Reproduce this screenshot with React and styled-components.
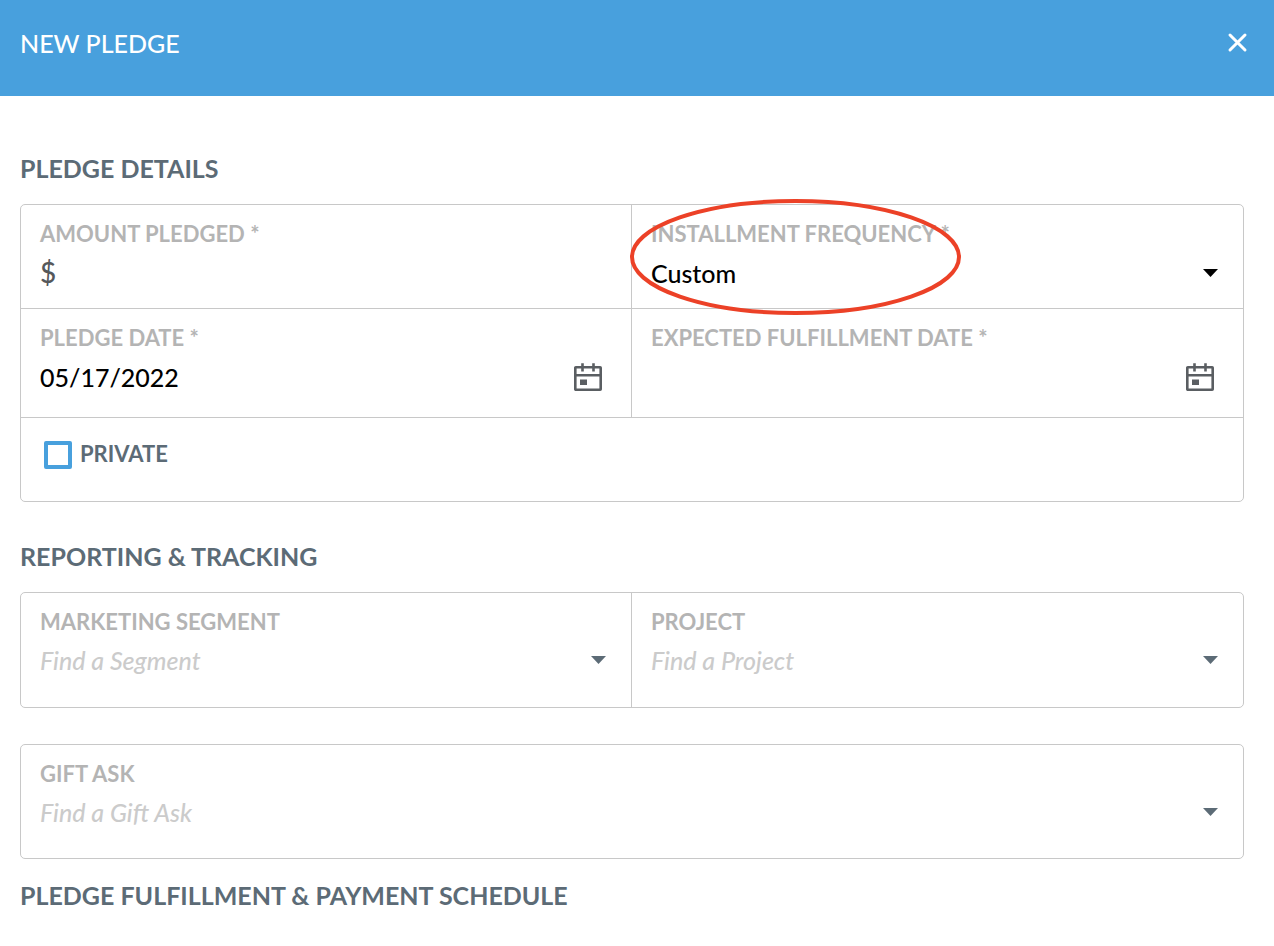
import React, { useState } from "react";
import styled, { createGlobalStyle } from "styled-components";

const GlobalStyle = createGlobalStyle`
*{
box-sizing:border-box;
}
body{
margin:0;
background-color:white;
font-family:Lato, "Open Sans", sans-serif;
}
`;

const Header = styled.header`
display:flex;
align-items:flex-start;
justify-content:space-between;
height:96px;
padding:27px 26px 0 20px;
background-color:#48a0dd;
color:white;
`;

const Title = styled.h1`
margin:0;
font-size:25px;
line-height:32px;
font-weight:500;
`;

const CloseButton = styled.button`
display:flex;
margin-top:5px;
padding:0;
border:none;
background:none;
color:inherit;
cursor:pointer;
`;

const Form = styled.form`
padding:56px 30px 32px 20px;
`;

const SectionTitle = styled.h2`
margin:0;
font-size:25px;
line-height:32px;
font-weight:700;
color:#5c6b76;
`;

const Card = styled.div`
margin-top:${(props) => (props.$spaced ? "36px" : "20px")};
margin-bottom:${(props) => props.$bottom || "0"};
border:1px solid #c8c8c8;
border-radius:5px;
`;

const Row = styled.div`
display:grid;
grid-template-columns:${(props) => (props.$single ? "1fr" : "1fr 1fr")};
height:${(props) => props.$height};
& + &{
border-top:1px solid #c8c8c8;
}
`;

const Cell = styled.div`
position:relative;
display:flex;
flex-direction:column;
min-width:0;
padding:15px 19px 0;
&:not(:last-child){
border-right:1px solid #c8c8c8;
}
`;

const Label = styled.label`
font-size:22px;
line-height:28px;
font-weight:700;
color:#b4b4b4;
`;

const Control = styled.div`
display:flex;
align-items:center;
height:40px;
margin-top:${(props) => (props.$tight ? "4px" : "5px")};
color:${(props) => props.$color || "#5c6b76"};
`;

const Prefix = styled.span`
font-size:28px;
line-height:32px;
font-weight:500;
color:#55585b;
`;

const Input = styled.input`
flex:1;
min-width:0;
height:32px;
padding:0;
border:none;
outline:none;
background:none;
font-family:inherit;
font-size:25px;
font-weight:500;
color:black;
`;

const Select = styled.select`
flex:1;
min-width:0;
height:36px;
padding:0;
border:none;
outline:none;
appearance:none;
background:none;
font-family:inherit;
font-size:25px;
font-weight:500;
font-style:${(props) => (props.$empty ? "italic" : "normal")};
color:${(props) => (props.$empty ? "#cbcbcb" : "black")};
`;

const IconButton = styled.button`
display:flex;
margin-right:10px;
padding:0;
border:none;
background:none;
color:#5a5e62;
cursor:pointer;
`;

const Arrow = styled.svg`
flex:none;
margin-right:6px;
pointer-events:none;
`;

const CheckLabel = styled.label`
display:flex;
align-items:center;
gap:8px;
padding:6px 4px 0;
font-size:22px;
line-height:28px;
font-weight:700;
color:#5c6b76;
`;

const Checkbox = styled.input`
appearance:none;
width:28px;
height:28px;
margin:2px 0 0;
border:4px solid #48a0dd;
border-radius:2px;
background-color:white;
&:checked{
background-color:#48a0dd;
}
`;

const Highlight = styled.svg`
position:absolute;
top:-7px;
left:-3px;
pointer-events:none;
`;

const CalendarIcon = () => (
  <svg width="28" height="28" viewBox="0 0 28 28" fill="none" aria-hidden="true">
    <rect x="1.3" y="4.3" width="25.4" height="22.4" rx="0.5" stroke="currentColor" strokeWidth="2.6" />
    <path d="M1 12.3H27M8.5 0.3V8.5M19.5 0.3V8.5" stroke="currentColor" strokeWidth="2.6" />
    <rect x="6" y="16.5" width="7" height="5.5" fill="currentColor" />
  </svg>
);

const DateField = ({ id, label, value }) => {
  const [date, setDate] = useState(value);
  return (
    <Cell>
      <Label htmlFor={id}>{label}</Label>
      <Control>
        <Input id={id} value={date} onChange={(e) => setDate(e.target.value)} />
        <IconButton type="button" aria-label="Open calendar">
          <CalendarIcon />
        </IconButton>
      </Control>
    </Cell>
  );
};

const SelectField = ({ id, label, text, selected, children }) => (
  <Cell>
    <Label htmlFor={id}>{label}</Label>
    <Control $tight={!selected} $color={selected ? "black" : "#5c6b76"}>
      <Select id={id} $empty={!selected}>
        <option>{text}</option>
      </Select>
      <Arrow width="15" height="8" viewBox="0 0 15 8" aria-hidden="true">
        <path d="M0 0H15L7.5 8Z" fill="currentColor" />
      </Arrow>
    </Control>
    {children}
  </Cell>
);

const App = () => {
  return (
    <>
      <GlobalStyle />
      <Header>
        <Title>NEW PLEDGE</Title>
        <CloseButton type="button" aria-label="Close">
          <svg width="21" height="21" viewBox="0 0 21 21" aria-hidden="true">
            <path d="M3 3L18 18M18 3L3 18" stroke="currentColor" strokeWidth="3" strokeLinecap="round" />
          </svg>
        </CloseButton>
      </Header>
      <Form>
        <SectionTitle>PLEDGE DETAILS</SectionTitle>
        <Card $bottom="38px">
          <Row $height="103px">
            <Cell>
              <Label htmlFor="amount">AMOUNT PLEDGED *</Label>
              <Control $tight>
                <Prefix>$</Prefix>
                <Input id="amount" />
              </Control>
            </Cell>
            <SelectField id="frequency" label="INSTALLMENT FREQUENCY *" text="Custom" selected>
              <Highlight width="333" height="118" viewBox="0 0 333 118" fill="none">
                <ellipse cx="166.5" cy="59" rx="163.5" ry="56" stroke="#ec4127" strokeWidth="4" />
              </Highlight>
            </SelectField>
          </Row>
          <Row $height="109px">
            <DateField id="pledge-date" label="PLEDGE DATE *" value="05/17/2022" />
            <DateField id="fulfillment-date" label="EXPECTED FULFILLMENT DATE *" value="" />
          </Row>
          <Row $single $height="84px">
            <Cell>
              <CheckLabel>
                <Checkbox type="checkbox" />
                PRIVATE
              </CheckLabel>
            </Cell>
          </Row>
        </Card>
        <SectionTitle>REPORTING &amp; TRACKING</SectionTitle>
        <Card>
          <Row $height="114px">
            <SelectField id="segment" label="MARKETING SEGMENT" text="Find a Segment" />
            <SelectField id="project" label="PROJECT" text="Find a Project" />
          </Row>
        </Card>
        <Card $spaced $bottom="20px">
          <Row $single $height="113px">
            <SelectField id="gift-ask" label="GIFT ASK" text="Find a Gift Ask" />
          </Row>
        </Card>
        <SectionTitle>PLEDGE FULFILLMENT &amp; PAYMENT SCHEDULE</SectionTitle>
      </Form>
    </>
  );
};

export default App;
